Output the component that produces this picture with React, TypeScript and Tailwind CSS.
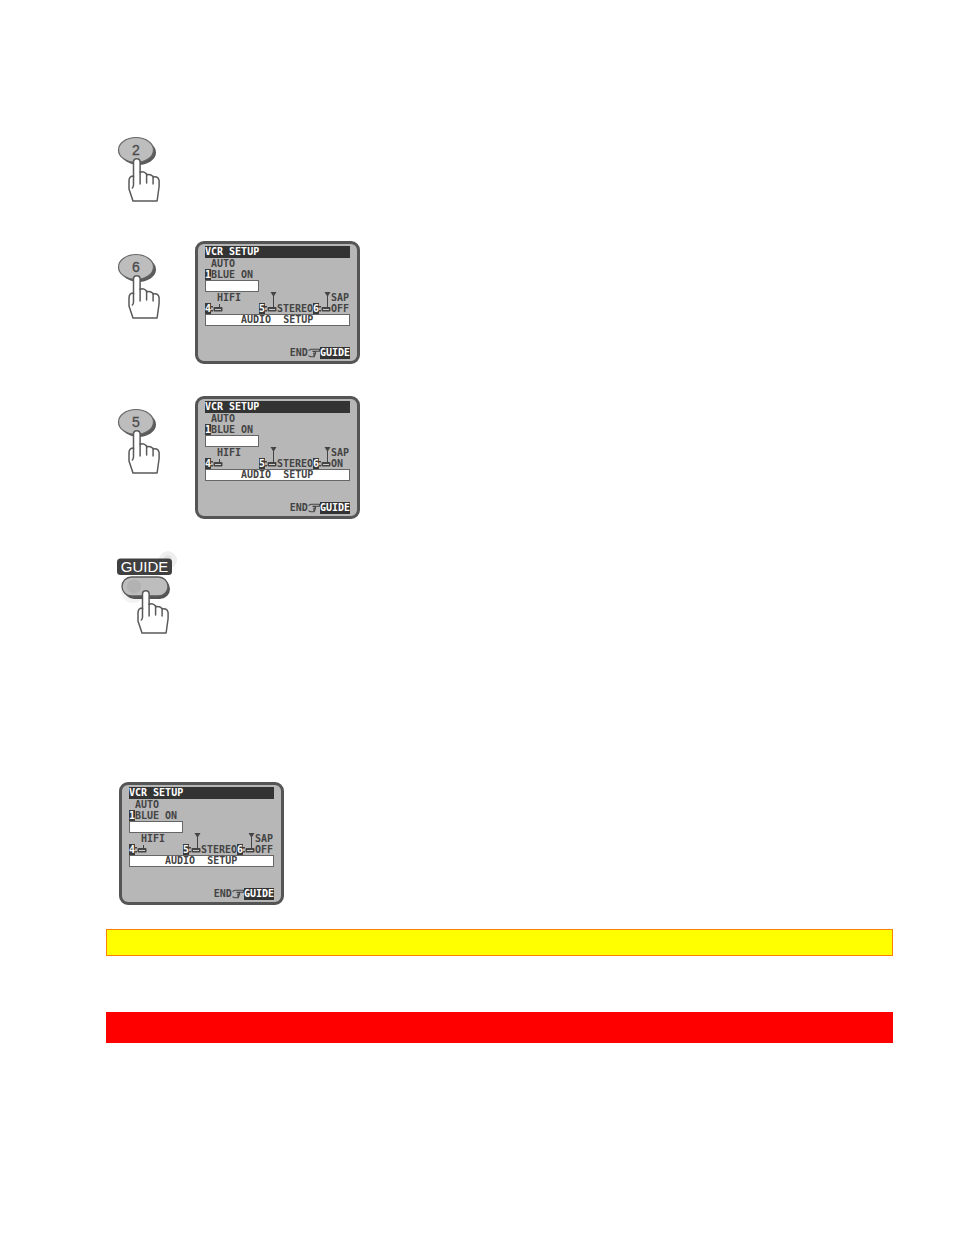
import clsx from "clsx"

const HAND_OUTLINE =
  "M17.5 43V28a3.3 3.3 0 0 1 6.6 0V38.5q3.5-2 6.5 1.5v1q3.5-1.5 6.5 1.5v.5q5-1 6 3.5v6l-2 14.5H17l-4-12v-8q0-5 4.5-5z"

function PressingHand() {
  return (
    <g strokeLinecap="round" strokeLinejoin="round" stroke="#5a5a5a" strokeWidth="1.5">
      <path d={HAND_OUTLINE} fill="#fff" />
      <path d="M17.5 42v9q0 2-1.2 3M24.1 38v12M30.6 40v9M37.1 42.5v7.5" fill="none" />
    </g>
  )
}

function NumberKey({ digit }: { digit: string }) {
  return (
    <svg width="48" height="70" viewBox="0 0 48 70" role="img" aria-label={`Press ${digit}`} className="shrink-0">
      <ellipse cx="22.5" cy="18.5" rx="17.5" ry="12.5" fill="#5a5a5a" />
      <ellipse cx="20" cy="16" rx="17.5" ry="12.5" fill="#bdbdbd" stroke="#666" strokeWidth="1.2" />
      <text x="20" y="21" textAnchor="middle" fontSize="14" fill="#4a4a4a" stroke="#4a4a4a" strokeWidth="0.3" fontFamily="Liberation Sans, sans-serif">
        {digit}
      </text>
      <PressingHand />
    </svg>
  )
}

function GuideKey() {
  return (
    <svg width="72" height="86" viewBox="0 0 72 86" role="img" aria-label="Press GUIDE" className="shrink-0">
      <circle cx="56" cy="10" r="9" fill="#efefef" />
      <circle cx="56" cy="9" r="4" fill="#e2e2e2" />
      <circle cx="21" cy="41" r="12" fill="#f3f3f3" />
      <rect x="5" y="8.5" width="55" height="16.5" rx="3.5" fill="#404040" />
      <text x="32.5" y="22" textAnchor="middle" fontSize="15" fill="#fff" fontFamily="Liberation Sans, sans-serif">
        GUIDE
      </text>
      <rect x="12" y="29" width="46" height="20" rx="10" fill="#555" />
      <rect x="10" y="27" width="46" height="19" rx="9.5" fill="#bdbdbd" stroke="#5a5a5a" strokeWidth="1.3" />
      <circle cx="22" cy="36.5" r="7" fill="#b2b2b2" />
      <g transform="translate(13 16)">
        <PressingHand />
      </g>
    </svg>
  )
}

// Slide switch, with an optional selection marker standing on it
function Switch({ marker, className }: { marker?: boolean; className: string }) {
  return (
    <svg width="12" height="22" viewBox="0 0 12 22" className={clsx("row-span-2 row-start-1", className)}>
      <rect x="0" y="14" width="2" height="1.5" fill="#444" />
      <rect x="0" y="18" width="2" height="1.5" fill="#444" />
      <rect x="2.5" y="15" width="9" height="4.5" rx="1" fill="#444" />
      <rect x="4" y="17" width="6" height="1" fill="#ccc" />
      {marker ? (
        <path d="M5.5 0h6L9 4v11.5H8V4z" fill="#444" />
      ) : (
        <rect x="8" y="12" width="1" height="4" fill="#444" />
      )}
    </svg>
  )
}

function PointingHand() {
  return (
    <svg width="12" height="12" viewBox="0 0 12 12" fill="none" stroke="#444" strokeWidth="1.1">
      <path d="M.5 3.5l2.5-1.2h8.5v2H7.5v1.8H7v1.8h-.7v1.8H2.5l-2-1M4.5 4.4h3M5 6.2h2M5 8h1.5" />
    </svg>
  )
}

function Badge({ children, className }: { children: string; className?: string }) {
  return <span className={clsx("w-1.5 bg-[#3a3a3a] text-white", className)}>{children}</span>
}

function VcrScreen({ sap }: { sap: "ON" | "OFF" }) {
  return (
    <div className="w-[165px] shrink-0 rounded-[9px] border-[3px] border-[#555] bg-[#b7b7b7] px-[7px] py-[2px] font-['DejaVu_Sans_Mono',monospace] text-[10px] leading-[11px] font-bold whitespace-nowrap text-[#444]">
      <div className="h-3 bg-[#333] leading-3 text-white">VCR SETUP</div>
      <div className="pl-1.5">AUTO</div>
      <div className="flex">
        <Badge>1</Badge>
        <span>BLUE ON</span>
      </div>
      <div className="h-3 w-[54px] border border-[#666] bg-white" />
      <div className="grid grid-cols-[repeat(24,6px)] grid-rows-[11px_11px]">
        <span className="col-span-4 col-start-3 row-start-1">HIFI</span>
        <span className="col-span-3 col-start-22 row-start-1">SAP</span>
        <Badge className="col-start-1 row-start-2">4</Badge>
        <Switch className="col-span-2 col-start-2" />
        <Badge className="col-start-10 row-start-2">5</Badge>
        <Switch marker className="col-span-2 col-start-11" />
        <span className="col-span-6 col-start-13 row-start-2">STEREO</span>
        <Badge className="col-start-19 row-start-2">6</Badge>
        <Switch marker className="col-span-2 col-start-20" />
        <span className="col-span-3 col-start-22 row-start-2">{sap}</span>
      </div>
      <div className="h-3 border border-[#666] bg-white pl-[35px] leading-[10px] whitespace-pre">{"AUDIO  SETUP"}</div>
      <div className="mt-[21px] flex h-3 justify-end leading-3">
        <span>END</span>
        <PointingHand />
        <span className="bg-[#333] text-white">GUIDE</span>
      </div>
    </div>
  )
}

function Step({ digit, sap }: { digit: string; sap: "ON" | "OFF" }) {
  return (
    <div className="flex items-start gap-[31px] pl-[10px]">
      <div className="pt-[10px]">
        <NumberKey digit={digit} />
      </div>
      <VcrScreen sap={sap} />
    </div>
  )
}

export default function App() {
  return (
    <main className="min-h-screen bg-white pt-[134px] pr-[61px] pb-48 pl-[106px]">
      <div className="pl-[10px]">
        <NumberKey digit="2" />
      </div>
      <div className="mt-[37px] flex flex-col gap-8">
        <Step digit="6" sap="OFF" />
        <Step digit="5" sap="ON" />
      </div>
      <div className="mt-[31px] pl-[6px]">
        <GuideKey />
      </div>
      <div className="mt-[146px] pl-[13px]">
        <VcrScreen sap="OFF" />
      </div>
      <div className="mt-6 h-[27px] border border-[#ff8000] bg-[#ffff00]" />
      <div className="mt-14 h-[31px] bg-[#ff0000]" />
    </main>
  )
}
